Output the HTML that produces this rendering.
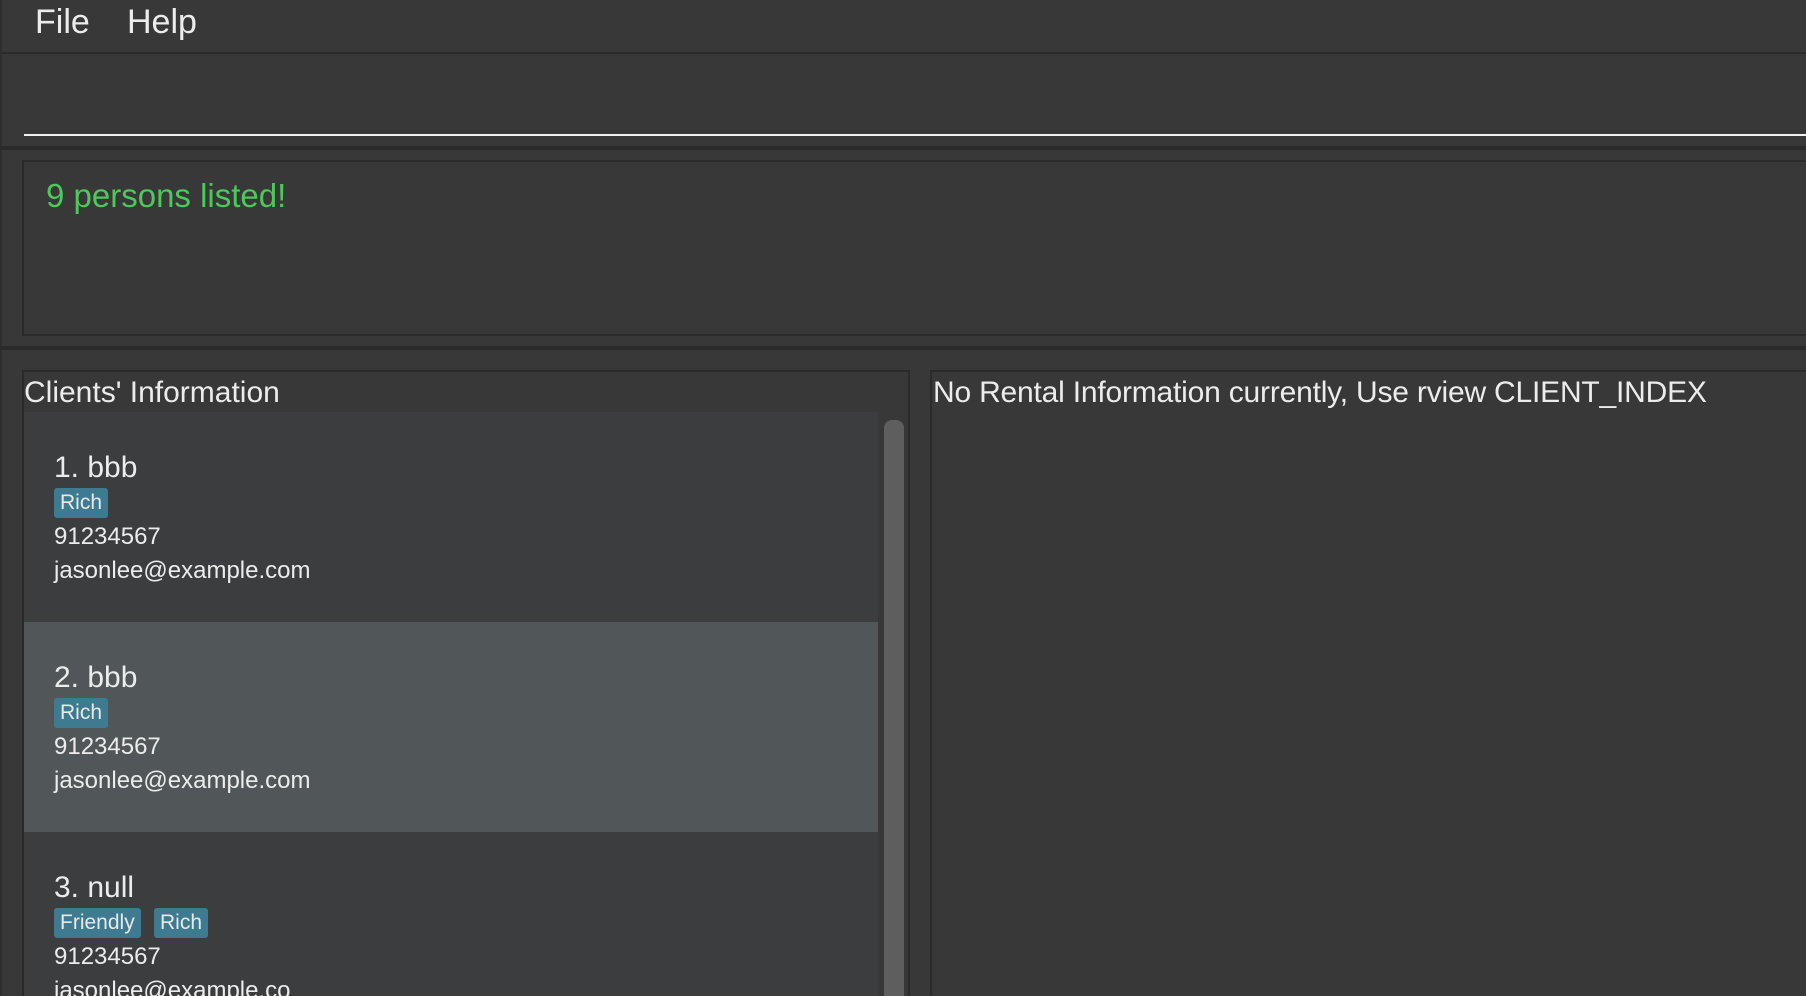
<!DOCTYPE html>
<html style="overflow:hidden;height:996px"><head><meta charset="utf-8"><style>
*{margin:0;padding:0;box-sizing:border-box}
body{width:1806px;height:996px;overflow:hidden;background:#383838;font-family:"Liberation Sans",sans-serif;color:#ececec;position:relative}
.abs{position:absolute}
.line{position:absolute;left:0;width:1806px;background:#2a2a2a}
.t{position:absolute;white-space:nowrap;line-height:1}
.tag{position:absolute;background:#3e7b91;border-radius:3px;color:#e8e8e8;font-size:21px;line-height:30px;padding:0 6px;height:30px}
</style></head><body>
<div class="abs" style="left:0;top:0;width:2px;height:996px;background:#2f2f2f"></div>
<div class="t" style="left:35px;top:5px;font-size:34px">File</div>
<div class="t" style="left:127px;top:5px;font-size:34px">Help</div>
<div class="line" style="top:52px;height:2px"></div>
<div class="abs" style="left:24px;top:134px;width:1782px;height:2px;background:#f0f0f0"></div>
<div class="line" style="top:146px;height:4px"></div>
<div class="abs" style="left:22px;top:160px;width:1800px;height:176px;border:2px solid #2a2a2a"></div>
<div class="t" style="left:46px;top:179px;font-size:33px;color:#4cc95a">9 persons listed!</div>
<div class="line" style="top:346px;height:4px"></div>
<div class="abs" style="left:22px;top:370px;width:888px;height:640px;border:2px solid #2a2a2a"></div>
<div class="abs" style="left:930px;top:370px;width:900px;height:640px;border:2px solid #2a2a2a"></div>
<div class="t" style="left:24px;top:378px;font-size:30px">Clients' Information</div>
<div class="t" style="left:933px;top:378px;font-size:30px;letter-spacing:-0.2px">No Rental Information currently, Use rview CLIENT_INDEX</div>
<div class="abs" style="left:24px;top:412px;width:854px;height:210px;background:#3c3d3f"></div>
<div class="abs" style="left:24px;top:622px;width:854px;height:210px;background:#515659"></div>
<div class="abs" style="left:24px;top:832px;width:854px;height:164px;background:#3c3d3f"></div>
<div class="abs" style="left:884px;top:420px;width:20px;height:600px;background:#5e5e5e;border-radius:8px"></div>

<div class="t" style="left:54px;top:453px;font-size:30px">1. bbb</div>
<div class="tag" style="left:54px;top:488px">Rich</div>
<div class="t" style="left:54px;top:525px;font-size:24px">91234567</div>
<div class="t" style="left:54px;top:559px;font-size:24px">jasonlee@example.com</div>

<div class="t" style="left:54px;top:663px;font-size:30px">2. bbb</div>
<div class="tag" style="left:54px;top:698px">Rich</div>
<div class="t" style="left:54px;top:735px;font-size:24px">91234567</div>
<div class="t" style="left:54px;top:769px;font-size:24px">jasonlee@example.com</div>

<div class="t" style="left:54px;top:873px;font-size:30px">3. null</div>
<div class="tag" style="left:54px;top:908px">Friendly</div>
<div class="tag" style="left:154px;top:908px">Rich</div>
<div class="t" style="left:54px;top:945px;font-size:24px">91234567</div>
<div class="t" style="left:54px;top:979px;font-size:24px">jasonlee@example.co</div>
</body></html>
